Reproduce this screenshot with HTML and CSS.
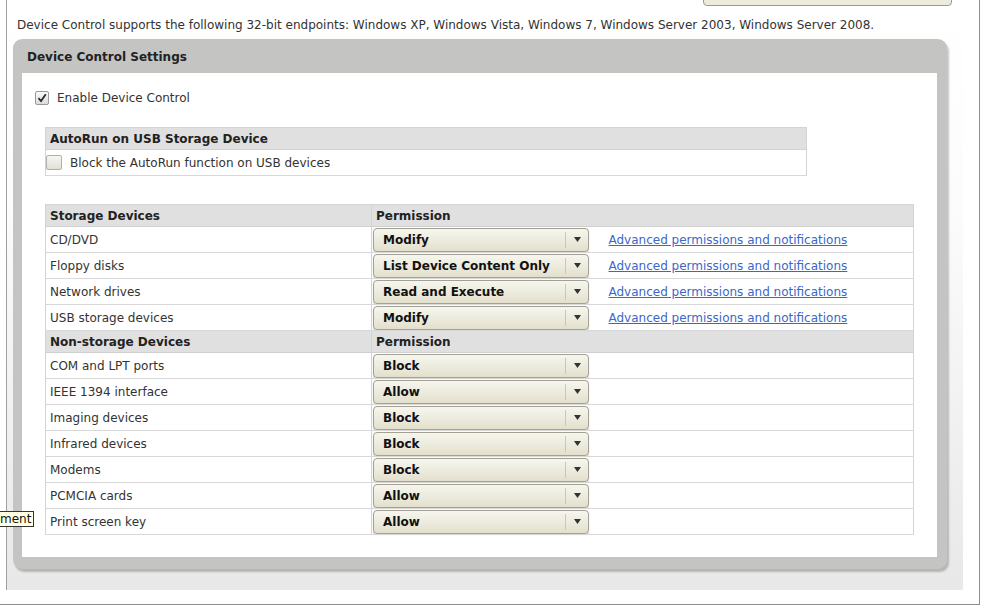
FILE: index.html
```html
<!DOCTYPE html>
<html lang="en">
<head>
  <meta charset="UTF-8" />
  <title>Device Control Settings</title>
  <link rel="stylesheet" href="styles.css">
</head>
<body>

  <div class="frame">
    <div class="page">

      <!-- Toolbar (scrolled, only the bottom of the button shows) -->
      <div class="top-actions">
        <div class="top-btn"></div>
      </div>

      <p class="intro">Device Control supports the following 32-bit endpoints: Windows XP, Windows Vista, Windows 7, Windows Server 2003, Windows Server 2008.</p>

      <!-- Settings panel -->
      <div class="panel">
        <div class="panel-title">Device Control Settings</div>
        <div class="panel-body">

          <label class="check-row">
            <span class="check checked">
              <svg width="10" height="10" viewBox="0 0 10 10"><path d="M1.5 5.2 L4 8 L8.8 1.2" fill="none" stroke="#2b2b2b" stroke-width="1.8"/></svg>
            </span>
            Enable Device Control
          </label>

          <table class="grid autorun">
            <tr class="head"><th>AutoRun on USB Storage Device</th></tr>
            <tr>
              <td>
                <label class="check-row">
                  <span class="check big"></span>
                  Block the AutoRun function on USB devices
                </label>
              </td>
            </tr>
          </table>

          <table class="grid devices">
            <tr class="head">
              <th class="name">Storage Devices</th>
              <th class="perm" colspan="2">Permission</th>
            </tr>
            <tr>
              <td class="name">CD/DVD</td>
              <td class="perm"><div class="select"><span class="select-value">Modify</span><span class="select-arrow"><svg width="7" height="5" viewBox="0 0 7 5"><path d="M0 0 H7 L3.5 5 Z" fill="#333"/></svg></span></div></td>
              <td class="extra"><a href="#">Advanced permissions and notifications</a></td>
            </tr>
            <tr>
              <td class="name">Floppy disks</td>
              <td class="perm"><div class="select"><span class="select-value">List Device Content Only</span><span class="select-arrow"><svg width="7" height="5" viewBox="0 0 7 5"><path d="M0 0 H7 L3.5 5 Z" fill="#333"/></svg></span></div></td>
              <td class="extra"><a href="#">Advanced permissions and notifications</a></td>
            </tr>
            <tr>
              <td class="name">Network drives</td>
              <td class="perm"><div class="select"><span class="select-value">Read and Execute</span><span class="select-arrow"><svg width="7" height="5" viewBox="0 0 7 5"><path d="M0 0 H7 L3.5 5 Z" fill="#333"/></svg></span></div></td>
              <td class="extra"><a href="#">Advanced permissions and notifications</a></td>
            </tr>
            <tr>
              <td class="name">USB storage devices</td>
              <td class="perm"><div class="select"><span class="select-value">Modify</span><span class="select-arrow"><svg width="7" height="5" viewBox="0 0 7 5"><path d="M0 0 H7 L3.5 5 Z" fill="#333"/></svg></span></div></td>
              <td class="extra"><a href="#">Advanced permissions and notifications</a></td>
            </tr>
            <tr class="head">
              <th class="name">Non-storage Devices</th>
              <th class="perm" colspan="2">Permission</th>
            </tr>
            <tr>
              <td class="name">COM and LPT ports</td>
              <td class="perm"><div class="select"><span class="select-value">Block</span><span class="select-arrow"><svg width="7" height="5" viewBox="0 0 7 5"><path d="M0 0 H7 L3.5 5 Z" fill="#333"/></svg></span></div></td>
              <td class="extra"></td>
            </tr>
            <tr>
              <td class="name">IEEE 1394 interface</td>
              <td class="perm"><div class="select"><span class="select-value">Allow</span><span class="select-arrow"><svg width="7" height="5" viewBox="0 0 7 5"><path d="M0 0 H7 L3.5 5 Z" fill="#333"/></svg></span></div></td>
              <td class="extra"></td>
            </tr>
            <tr>
              <td class="name">Imaging devices</td>
              <td class="perm"><div class="select"><span class="select-value">Block</span><span class="select-arrow"><svg width="7" height="5" viewBox="0 0 7 5"><path d="M0 0 H7 L3.5 5 Z" fill="#333"/></svg></span></div></td>
              <td class="extra"></td>
            </tr>
            <tr>
              <td class="name">Infrared devices</td>
              <td class="perm"><div class="select"><span class="select-value">Block</span><span class="select-arrow"><svg width="7" height="5" viewBox="0 0 7 5"><path d="M0 0 H7 L3.5 5 Z" fill="#333"/></svg></span></div></td>
              <td class="extra"></td>
            </tr>
            <tr>
              <td class="name">Modems</td>
              <td class="perm"><div class="select"><span class="select-value">Block</span><span class="select-arrow"><svg width="7" height="5" viewBox="0 0 7 5"><path d="M0 0 H7 L3.5 5 Z" fill="#333"/></svg></span></div></td>
              <td class="extra"></td>
            </tr>
            <tr>
              <td class="name">PCMCIA cards</td>
              <td class="perm"><div class="select"><span class="select-value">Allow</span><span class="select-arrow"><svg width="7" height="5" viewBox="0 0 7 5"><path d="M0 0 H7 L3.5 5 Z" fill="#333"/></svg></span></div></td>
              <td class="extra"></td>
            </tr>
            <tr>
              <td class="name">Print screen key</td>
              <td class="perm"><div class="select"><span class="select-value">Allow</span><span class="select-arrow"><svg width="7" height="5" viewBox="0 0 7 5"><path d="M0 0 H7 L3.5 5 Z" fill="#333"/></svg></span></div></td>
              <td class="extra"></td>
            </tr>
          </table>

        </div>
      </div>
    </div>
  </div>

  <!-- leftover tooltip from the menu on the left -->
  <div class="tooltip">ment</div>

</body>
</html>
```

FILE: styles.css
```css
* {
  box-sizing: border-box;
}

body {
  margin: 0;
  font-family: "DejaVu Sans", Verdana, sans-serif;
  font-size: 12px;
  color: #333;
  background: #fff;
}

.frame {
  width: 980px;
  height: 605px;
  padding-left: 6px;
  border-right: 1px solid #8e8e8e;
  border-bottom: 1px solid #8e8e8e;
}

.page {
  width: 957px;
  height: 590px;
  border-left: 1px solid #a0a0a0;
  background: linear-gradient(to bottom, #fff 0%, #fcfcfc 35%, #e8e8e8 100%);
}

.top-actions {
  height: 6px;
  overflow: hidden;
  display: flex;
  justify-content: flex-end;
  padding-right: 11px;
}

.top-btn {
  width: 249px;
  height: 22px;
  margin-top: -16px;
  border: 1px solid #9c9b90;
  border-radius: 4px;
  background: #ecebdc;
}

.intro {
  margin: 0;
  padding: 12px 0 0 10px;
  line-height: 14px;
  white-space: nowrap;
}

.panel {
  margin: 7px 16px 0 6px;
  padding: 0 10px 12px 9px;
  background: #c4c4c2;
  border-radius: 9px;
  box-shadow: 2px 3px 2px rgba(0, 0, 0, 0.22);
}

.panel-title {
  height: 34px;
  line-height: 36px;
  padding-left: 5px;
  font-weight: bold;
  color: #222;
}

.panel-body {
  background: #fff;
  padding: 18px 0 22px 13px;
}

.check-row {
  display: flex;
  align-items: center;
  gap: 8px;
  height: 14px;
}

.check {
  width: 14px;
  height: 14px;
  border: 1px solid #9a9a9a;
  border-radius: 2px;
  background: linear-gradient(to bottom, #fafafa, #dcdcdc);
  display: flex;
  align-items: center;
  justify-content: center;
}

.check.big {
  width: 16px;
  height: 15px;
  background: linear-gradient(to bottom, #f6f5ef, #e2e0d6);
  border-color: #b2b1a8;
}

.grid {
  border-collapse: collapse;
  margin-left: 10px;
  border: 1px solid #d4d4d4;
}

.grid th {
  background: #e0e0e0;
  text-align: left;
  font-weight: bold;
  color: #222;
  padding: 0 0 0 4px;
  height: 22px;
  border-bottom: 1px solid #d0d0d0;
}

.grid td {
  height: 26px;
  padding: 0 0 0 4px;
  border-bottom: 1px solid #d8d8d8;
}

.autorun {
  width: 762px;
  margin-top: 22px;
}

.autorun td {
  padding-left: 0;
}

.devices {
  width: 869px;
  margin-top: 28px;
}

.devices .name {
  width: 326px;
  border-right: 1px solid #d4d4d4;
}

.devices td.perm {
  width: 237px;
  padding-left: 1px;
}

.devices td.extra {
  padding-left: 0;
}

.select {
  display: flex;
  width: 216px;
  height: 24px;
  border: 1px solid #a3a194;
  border-radius: 4px;
  background: linear-gradient(to bottom, #f7f6ee 0%, #ebe9db 60%, #e2dfcc 100%);
  box-shadow: 0 1px 1px rgba(0, 0, 0, 0.25);
  font-weight: bold;
  color: #111;
}

.select-value {
  flex: 1;
  padding-left: 9px;
  line-height: 22px;
  white-space: nowrap;
}

.select-arrow {
  width: 23px;
  margin: 3px 0;
  border-left: 1px solid #c9c7b8;
  display: flex;
  align-items: center;
  justify-content: center;
}

a {
  color: #3a67c8;
  text-decoration: underline;
}

.tooltip {
  position: absolute;
  left: -2px;
  top: 511px;
  height: 16px;
  line-height: 14px;
  padding: 0 2px 0 1px;
  border: 1px solid #333;
  background: #ffffe1;
  color: #111;
}
```
